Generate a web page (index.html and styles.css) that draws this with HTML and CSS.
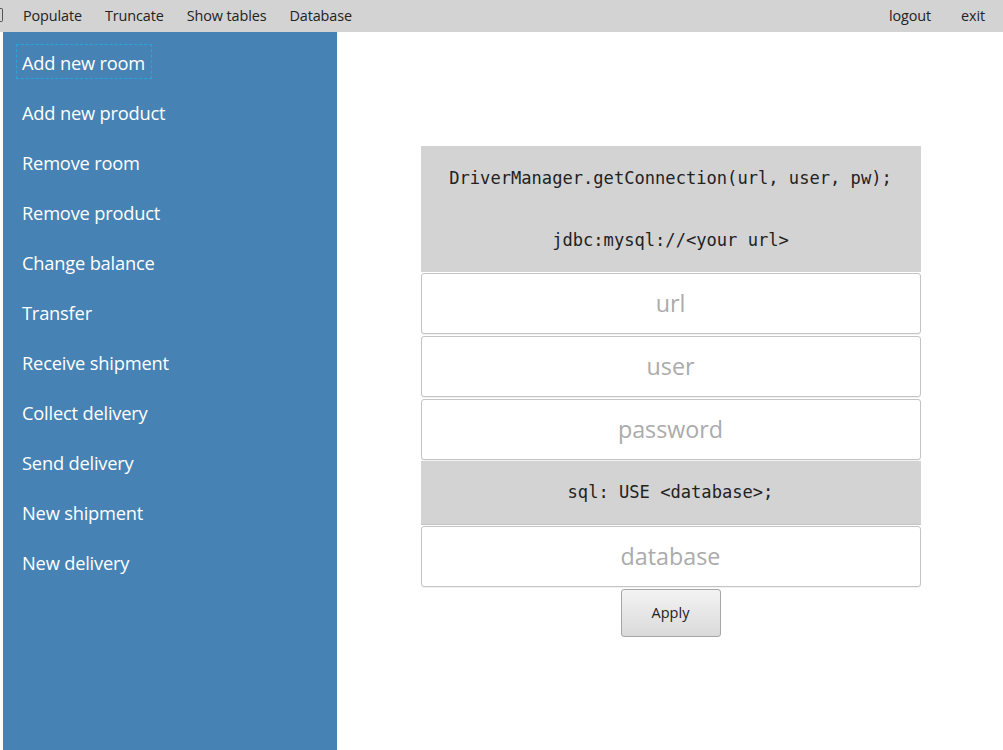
FILE: index.html
```html
<!DOCTYPE html>
<html>
<head>
<meta charset="utf-8">
<link rel="stylesheet" href="styles.css">
</head>
<body>
<div class="menubar">
  <span class="edge"></span>
  <nav class="menu-left">
    <span class="menu-item">Populate</span>
    <span class="menu-item">Truncate</span>
    <span class="menu-item">Show tables</span>
    <span class="menu-item">Database</span>
  </nav>
  <nav class="menu-right">
    <span class="menu-item">logout</span>
    <span class="menu-item">exit</span>
  </nav>
</div>
<div class="main">
  <aside class="sidebar">
    <div class="side-item focused">Add new room</div>
    <div class="side-item">Add new product</div>
    <div class="side-item">Remove room</div>
    <div class="side-item">Remove product</div>
    <div class="side-item">Change balance</div>
    <div class="side-item">Transfer</div>
    <div class="side-item">Receive shipment</div>
    <div class="side-item">Collect delivery</div>
    <div class="side-item">Send delivery</div>
    <div class="side-item">New shipment</div>
    <div class="side-item">New delivery</div>
  </aside>
  <section class="content">
    <div class="panel">
      <div class="info info-double">
        <div class="code-line">DriverManager.getConnection(url, user, pw);</div>
        <div class="code-line">jdbc:mysql://&lt;your url&gt;</div>
      </div>
      <div class="field"><input class="input" type="text" placeholder="url"></div>
      <div class="field"><input class="input" type="text" placeholder="user"></div>
      <div class="field"><input class="input" type="password" placeholder="password"></div>
      <div class="info">
        <div class="code-line">sql: USE &lt;database&gt;;</div>
      </div>
      <div class="field"><input class="input" type="text" placeholder="database"></div>
      <button class="apply">Apply</button>
    </div>
  </section>
</div>
</body>
</html>
```
FILE: styles.css
```css
* { box-sizing: border-box; }
html, body {
  margin: 0;
  padding: 0;
  background: #ffffff;
  font-family: "Open Sans", "Noto Sans", sans-serif;
}
.menubar {
  height: 32px;
  background: #d3d3d3;
  display: flex;
  align-items: center;
  position: relative;
  padding-bottom: 1px;
}
.edge {
  position: absolute;
  left: 0;
  top: 8px;
  width: 3px;
  height: 14px;
  border: 1px solid #555;
  border-left: none;
  border-radius: 0 2px 2px 0;
}
.menu-left {
  display: flex;
  gap: 23px;
  padding-left: 23px;
  flex: 1;
}
.menu-right {
  display: flex;
  gap: 30px;
  padding-right: 18px;
}
.menu-item {
  font-size: 14.4px;
  color: #222;
  letter-spacing: -0.1px;
}
.main {
  display: flex;
  height: 718px;
  padding-left: 3px;
}
.sidebar {
  width: 334px;
  background: #4682b4;
  padding-top: 12px;
  display: flex;
  flex-direction: column;
  gap: 15px;
}
.side-item {
  height: 35px;
  line-height: 35px;
  margin-left: 13px;
  padding-left: 5px;
  color: #ffffff;
  font-size: 18.3px;
  letter-spacing: -0.2px;
  align-self: flex-start;
  padding-right: 6px;
  border: 1px solid transparent;
}
.side-item.focused {
  border: 1px dashed #2aa5dc;
}
.content {
  flex: 1;
  display: flex;
  align-items: center;
  justify-content: center;
  padding-left: 1px;
}
.panel {
  width: 500px;
  display: flex;
  flex-direction: column;
  align-items: center;
}
.info {
  width: 100%;
  background: #d3d3d3;
  border-bottom: 1px solid #c4c4c4;
}
.info-double {
  border-bottom: none;
}
.code-line {
  height: 63px;
  line-height: 63px;
  text-align: center;
  font-family: "DejaVu Sans Mono", "Liberation Mono", monospace;
  font-size: 17.1px;
  color: #222;
}
.info-double .code-line:first-child {
  line-height: 64px;
}
.field {
  width: 100%;
  height: 63px;
  padding: 1px 0;
}
.input {
  display: block;
  width: 100%;
  height: 61px;
  border: 1px solid #c4c4c4;
  border-radius: 3px;
  background: #fff;
  box-shadow: 0 1px 1px rgba(0,0,0,0.06);
  text-align: center;
  font-family: "Open Sans", "Noto Sans", sans-serif;
  font-size: 23.3px;
  color: #333;
  outline: none;
  padding: 0;
}
.input::placeholder {
  color: #ababab;
  font-weight: 400;
}
.apply {
  margin-top: 1px;
  width: 100px;
  height: 48px;
  border: 1px solid #a6a6a6;
  border-radius: 3px;
  background: linear-gradient(#f3f3f3, #dadada);
  font-family: "Open Sans", "Noto Sans", sans-serif;
  font-size: 14.5px;
  color: #222;
  padding: 0;
}
```
